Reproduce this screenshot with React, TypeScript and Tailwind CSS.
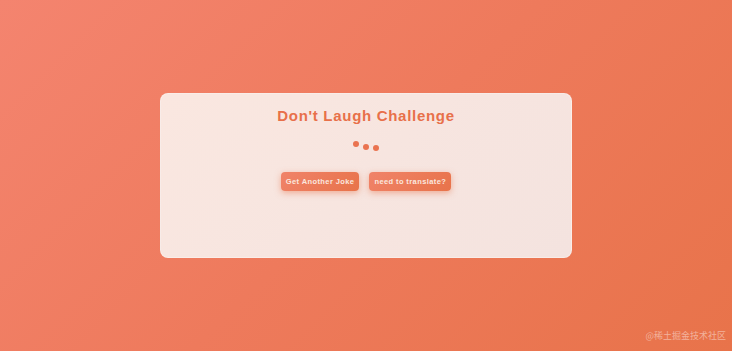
export default function App() {
  return (
    <div className="relative flex h-[351px] w-full items-center justify-center bg-[linear-gradient(135deg,#f4846f_0%,#ee7a5c_50%,#e8734a_100%)] font-['Liberation_Sans',Arial,sans-serif]">
      <div className="flex h-[165px] w-[412px] flex-col items-center rounded-lg border border-white/30 bg-[linear-gradient(135deg,#fae7e0,#f4e3df)] pt-[12px]">
        <h1 className="text-[15px] font-bold leading-[20px] tracking-[0.7px] text-[#e8704a]">
          Don&apos;t Laugh Challenge
        </h1>
        <div className="mt-[15px] flex h-[10px] items-start gap-[4.5px]">
          <span className="h-[5.5px] w-[5.5px] rounded-full bg-[#ea7350]" />
          <span className="mt-[3px] h-[5.5px] w-[5.5px] rounded-full bg-[#ea7350]" />
          <span className="mt-[4px] h-[5.5px] w-[5.5px] rounded-full bg-[#ea7350]" />
        </div>
        <div className="mt-[21px] flex gap-[10px]">
          <button className="h-[19px] rounded-[4px] bg-[linear-gradient(135deg,#f08369,#e8734a)] px-[5px] text-[7.5px] font-bold tracking-[0.4px] text-[#fbe7df] shadow-[0_2px_6px_rgba(232,115,74,0.5)]">
            Get Another Joke
          </button>
          <button className="h-[19px] rounded-[4px] bg-[linear-gradient(135deg,#f08369,#e8734a)] px-[5px] text-[7.5px] font-bold tracking-[0.4px] text-[#fbe7df] shadow-[0_2px_6px_rgba(232,115,74,0.5)]">
            need to translate?
          </button>
        </div>
      </div>
      <span className="absolute bottom-[9px] right-[6px] text-[9px] text-white/45 font-['Noto_Sans_CJK_SC',sans-serif]">
        @稀土掘金技术社区
      </span>
    </div>
  );
}
